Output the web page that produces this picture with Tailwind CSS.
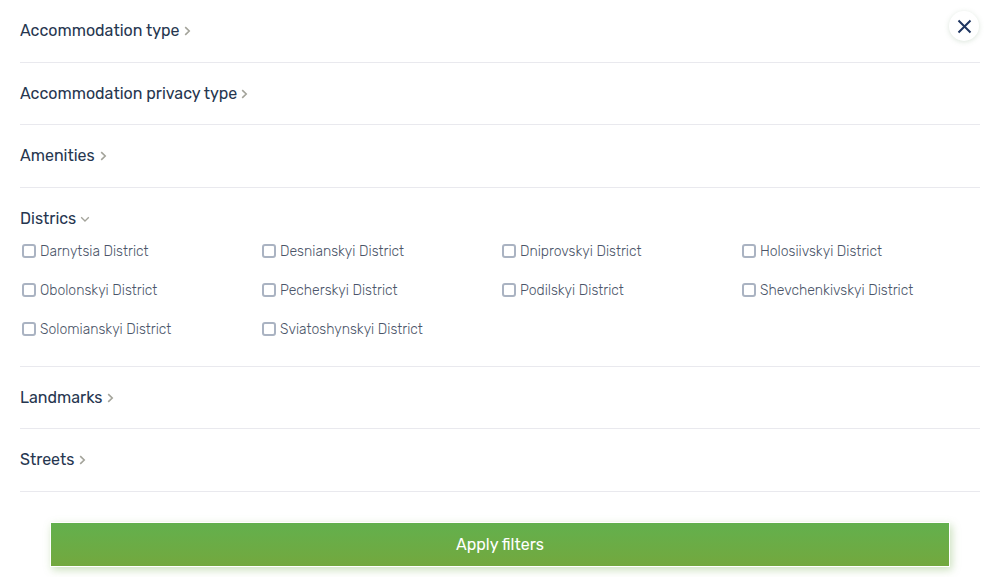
<!DOCTYPE html>
<html><head><script src="https://cdn.jsdelivr.net/npm/@tailwindcss/browser@4"></script></head>
<body class="bg-white font-['Rubik','Inter','Noto_Sans',sans-serif] overflow-hidden">
<div class="relative w-[1000px] h-[577px] overflow-hidden">
<div class="absolute left-[949px] top-[11px] w-[30px] h-[30px] rounded-full bg-white shadow-[0_1px_5px_rgba(110,150,110,0.25)] flex items-center justify-center">
<svg width="15" height="15" viewBox="0 0 15 15"><path d="M1.5 1.5L13.5 13.5M13.5 1.5L1.5 13.5" stroke="#1e3560" stroke-width="2"/></svg></div>
<div class="px-5">
<div class="h-[63px] border-b border-[#e9e9ee] flex items-center gap-[4px] text-[16px] font-[380] text-[#26364f] pb-[1px]"><span>Accommodation type</span><svg width="7" height="10" viewBox="0 0 7 10"><path d="M1.2 1.2l4 3.8-4 3.8" fill="none" stroke="#a3a39a" stroke-width="1.6"/></svg></div>
<div class="h-[62px] border-b border-[#e9e9ee] flex items-center gap-[4px] text-[16px] font-[380] text-[#26364f]"><span>Accommodation privacy type</span><svg width="7" height="10" viewBox="0 0 7 10"><path d="M1.2 1.2l4 3.8-4 3.8" fill="none" stroke="#a3a39a" stroke-width="1.6"/></svg></div>
<div class="h-[63px] border-b border-[#e9e9ee] flex items-center gap-[5px] text-[16px] font-[380] text-[#26364f]"><span>Amenities</span><svg width="7" height="10" viewBox="0 0 7 10"><path d="M1.2 1.2l4 3.8-4 3.8" fill="none" stroke="#a3a39a" stroke-width="1.6"/></svg></div>
<div class="h-[179px] border-b border-[#e9e9ee] pt-[20px]">
<div class="flex items-center gap-[4px] text-[16px] font-[380] text-[#26364f] h-[22px]"><span>Districs</span><svg width="10" height="7" viewBox="0 0 10 7"><path d="M1.2 1.2l3.8 3.8 3.8-3.8" fill="none" stroke="#a3a39a" stroke-width="1.3"/></svg></div>
<div class="grid grid-cols-4 w-[960px] mt-[1px] text-[14px] font-light text-[#4a5468]">
<label class="h-[39px] flex items-center gap-[4px] pl-[2px]"><span class="w-[14px] h-[14px] border-2 border-[#aab3c2] rounded-[3px] bg-white"></span><span class="pt-[2px]">Darnytsia District</span></label>
<label class="h-[39px] flex items-center gap-[4px] pl-[2px]"><span class="w-[14px] h-[14px] border-2 border-[#aab3c2] rounded-[3px] bg-white"></span><span class="pt-[2px]">Desnianskyi District</span></label>
<label class="h-[39px] flex items-center gap-[4px] pl-[2px]"><span class="w-[14px] h-[14px] border-2 border-[#aab3c2] rounded-[3px] bg-white"></span><span class="pt-[2px]">Dniprovskyi District</span></label>
<label class="h-[39px] flex items-center gap-[4px] pl-[2px]"><span class="w-[14px] h-[14px] border-2 border-[#aab3c2] rounded-[3px] bg-white"></span><span class="pt-[2px]">Holosiivskyi District</span></label>
<label class="h-[39px] flex items-center gap-[4px] pl-[2px]"><span class="w-[14px] h-[14px] border-2 border-[#aab3c2] rounded-[3px] bg-white"></span><span class="pt-[2px]">Obolonskyi District</span></label>
<label class="h-[39px] flex items-center gap-[4px] pl-[2px]"><span class="w-[14px] h-[14px] border-2 border-[#aab3c2] rounded-[3px] bg-white"></span><span class="pt-[2px]">Pecherskyi District</span></label>
<label class="h-[39px] flex items-center gap-[4px] pl-[2px]"><span class="w-[14px] h-[14px] border-2 border-[#aab3c2] rounded-[3px] bg-white"></span><span class="pt-[2px]">Podilskyi District</span></label>
<label class="h-[39px] flex items-center gap-[4px] pl-[2px]"><span class="w-[14px] h-[14px] border-2 border-[#aab3c2] rounded-[3px] bg-white"></span><span class="pt-[2px]">Shevchenkivskyi District</span></label>
<label class="h-[39px] flex items-center gap-[4px] pl-[2px]"><span class="w-[14px] h-[14px] border-2 border-[#aab3c2] rounded-[3px] bg-white"></span><span class="pt-[2px]">Solomianskyi District</span></label>
<label class="h-[39px] flex items-center gap-[4px] pl-[2px]"><span class="w-[14px] h-[14px] border-2 border-[#aab3c2] rounded-[3px] bg-white"></span><span class="pt-[2px]">Sviatoshynskyi District</span></label>
</div></div>
<div class="h-[62px] border-b border-[#e9e9ee] flex items-center gap-[5px] text-[16px] font-[380] text-[#26364f]"><span>Landmarks</span><svg width="7" height="10" viewBox="0 0 7 10"><path d="M1.2 1.2l4 3.8-4 3.8" fill="none" stroke="#a3a39a" stroke-width="1.6"/></svg></div>
<div class="h-[63px] border-b border-[#e9e9ee] flex items-center gap-[5px] text-[16px] font-[380] text-[#26364f]"><span>Streets</span><svg width="7" height="10" viewBox="0 0 7 10"><path d="M1.2 1.2l4 3.8-4 3.8" fill="none" stroke="#a3a39a" stroke-width="1.6"/></svg></div>
<div class="flex justify-center mt-[31px]"><button class="w-[900px] h-[45px] -mt-[1px] border border-white bg-linear-to-b from-[#62b04d] to-[#73a83e] text-white text-[16px] font-normal shadow-[2px_3px_8px_rgba(110,170,70,0.35)]">Apply filters</button></div>
</div></div>
</body></html>
